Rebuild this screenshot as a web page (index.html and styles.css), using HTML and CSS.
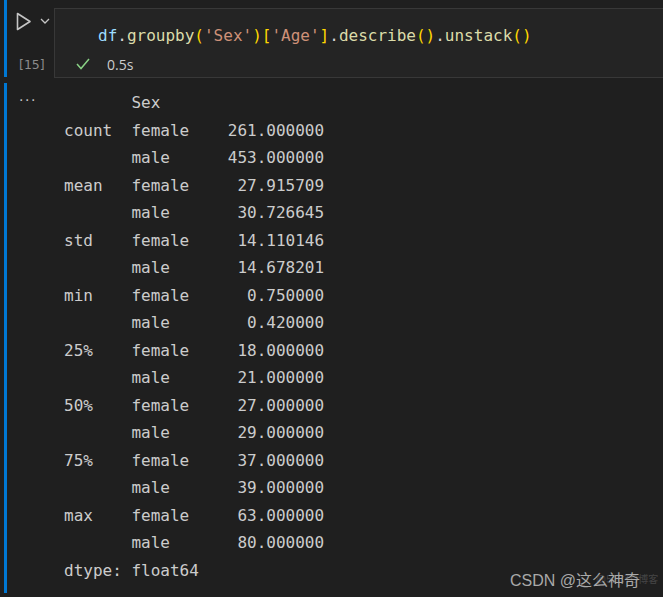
FILE: index.html
```html
<!DOCTYPE html>
<html>
<head>
<meta charset="utf-8">
<link rel="stylesheet" href="styles.css">
</head>
<body>
<div class="cell">
  <div class="bar bar-top"></div>
  <div class="gutter">
    <div class="run">
      <svg class="play" width="16" height="19" viewBox="0 0 16 19"><path d="M1.5 1.5 L14 9.5 L1.5 17.5 Z" fill="none" stroke="#c5c5c5" stroke-width="1.6" stroke-linejoin="round"/></svg>
      <svg class="chev" width="10" height="6" viewBox="0 0 10 6"><path d="M1 1 L5 5 L9 1" fill="none" stroke="#c5c5c5" stroke-width="1.3"/></svg>
    </div>
    <div class="count">[15]</div>
  </div>
  <div class="editor">
    <div class="code"><span class="v">df</span><span class="p">.</span><span class="f">groupby</span><span class="b">(</span><span class="s">'Sex'</span><span class="b">)[</span><span class="s">'Age'</span><span class="b">]</span><span class="p">.</span><span class="f">describe</span><span class="b">()</span><span class="p">.</span><span class="f">unstack</span><span class="b">()</span></div>
    <div class="status">
      <svg class="check" width="14" height="12" viewBox="0 0 14 12"><path d="M1 6 L5 10.5 L13 1" fill="none" stroke="#89d185" stroke-width="1.5"/></svg>
      <span class="time">0.5s</span>
    </div>
  </div>
</div>
<div class="output">
  <div class="bar bar-out"></div>
  <div class="ogutter">···</div>
  <pre class="out">       Sex   
count  female    261.000000
       male      453.000000
mean   female     27.915709
       male       30.726645
std    female     14.110146
       male       14.678201
min    female      0.750000
       male        0.420000
25%    female     18.000000
       male       21.000000
50%    female     27.000000
       male       29.000000
75%    female     37.000000
       male       39.000000
max    female     63.000000
       male       80.000000
dtype: float64</pre>
  <div class="watermark"><span class="wm-faint">@51CTO博客</span><span class="wm">CSDN @这么神奇</span></div>
</div>
</body>
</html>
```
FILE: styles.css
```css
html, body {
  margin: 0;
  padding: 0;
  background: #1f1f1f;
  width: 663px;
  height: 597px;
  overflow: hidden;
}

.cell {
  display: flex;
  height: 78px;
}

.bar {
  width: 3px;
  margin-left: 4px;
  background: #0078d4;
  flex: none;
}

.bar-top {
  height: 77px;
}

.gutter {
  width: 47px;
  flex: none;
  display: flex;
  flex-direction: column;
}

.run {
  display: flex;
  align-items: flex-start;
  padding-top: 12px;
  padding-left: 9px;
  height: 22px;
}

.play {
  display: block;
}

.chev {
  display: block;
  margin-left: 8px;
  margin-top: 6px;
}

.count {
  margin-top: 23px;
  padding-left: 12px;
  font-family: "DejaVu Sans", sans-serif;
  font-size: 12.5px;
  line-height: 16px;
  color: #8b8b8b;
}

.editor {
  margin-top: 8px;
  height: 68px;
  flex: 1;
  background: #242424;
  border: 1px solid #383838;
  border-right: none;
}

.code {
  padding-left: 43px;
  padding-top: 16px;
  font-family: "DejaVu Sans Mono", monospace;
  font-size: 16px;
  line-height: 22px;
  white-space: pre;
  color: #d4d4d4;
}

.v { color: #9cdcfe; }
.p { color: #d4d4d4; }
.f { color: #dcdcaa; }
.b { color: #ffd700; }
.s { color: #ce9178; }

.status {
  display: flex;
  align-items: center;
  padding-left: 21px;
  margin-top: 7px;
  height: 20px;
}

.check {
  display: block;
}

.time {
  margin-left: 17px;
  font-family: "Open Sans", sans-serif;
  font-size: 14px;
  color: #cccccc;
}

.output {
  position: relative;
  display: flex;
  margin-top: 5px;
}

.bar-out {
  height: 510px;
}

.ogutter {
  width: 57px;
  flex: none;
  padding-left: 12px;
  box-sizing: border-box;
  font-family: "DejaVu Sans", sans-serif;
  font-size: 14px;
  line-height: 16px;
  padding-top: 9px;
  color: #c5c5c5;
  letter-spacing: 1.5px;
}

.out {
  margin: 0;
  padding-top: 6px;
  font-family: "DejaVu Sans Mono", monospace;
  font-size: 16px;
  line-height: 27.5px;
  color: #cccccc;
}

.watermark {
  position: absolute;
  left: 510px;
  top: 484px;
  font-family: "Liberation Sans", "Noto Sans CJK SC", sans-serif;
  font-size: 16px;
  white-space: nowrap;
}

.wm {
  color: #a9a9a9;
  position: relative;
}

.wm-faint {
  position: absolute;
  left: 86px;
  top: 4px;
  font-size: 10px;
  color: rgba(160, 160, 160, 0.3);
}
```
